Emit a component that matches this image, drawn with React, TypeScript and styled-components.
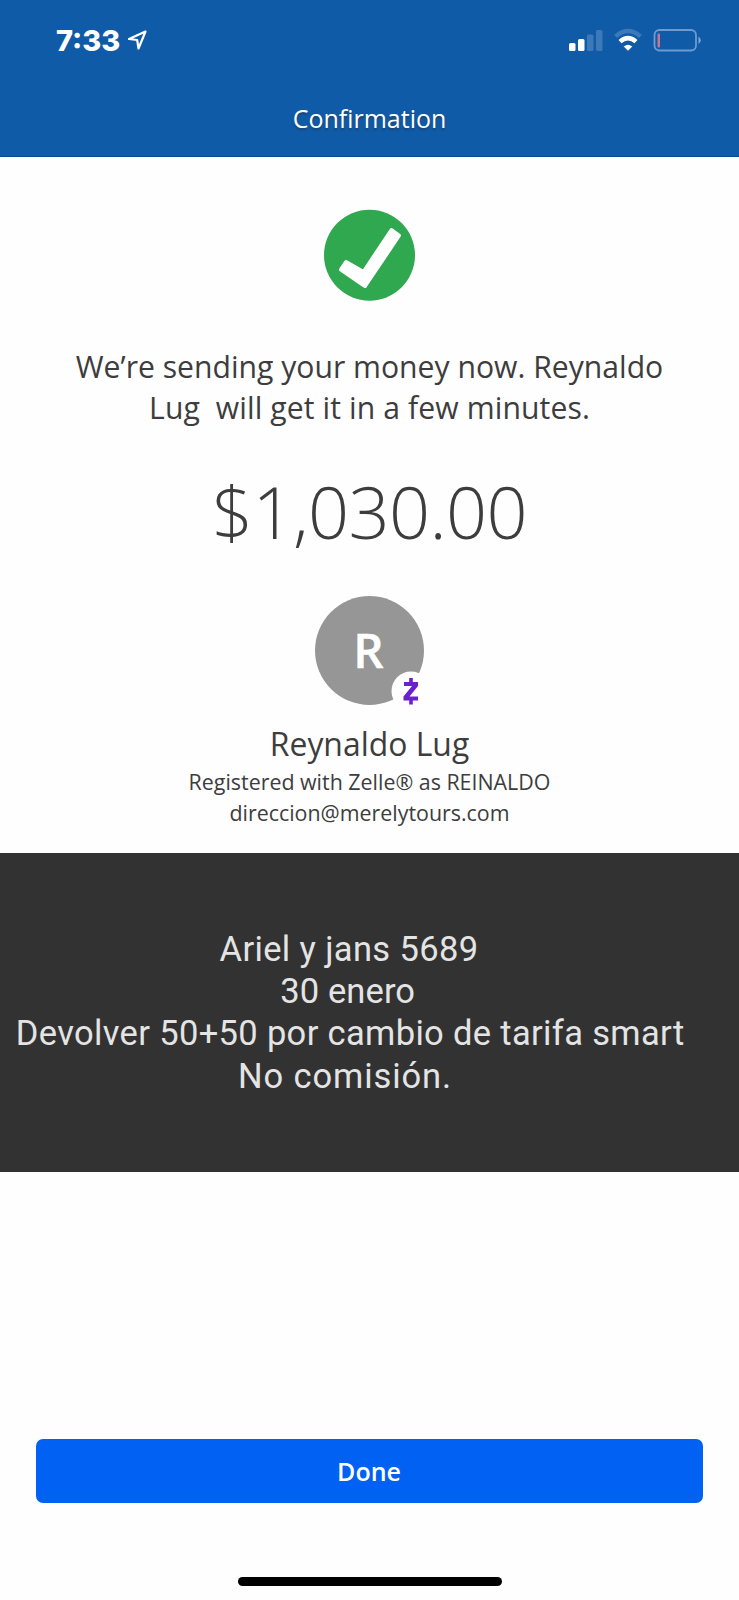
import React from 'react';
import styled, { createGlobalStyle } from 'styled-components';

const GlobalStyle = createGlobalStyle`
  * { box-sizing: border-box; }
  body { margin: 0; background: #fff; }
`;

const Screen = styled.main`
  width: 739px;
  height: 1600px;
  display: flex;
  flex-direction: column;
  overflow: hidden;
  background: #fefefe;
  color: #3d3d3d;
  font-family: 'Open Sans', 'Noto Sans', sans-serif;
`;

const Header = styled.header`
  height: 157px;
  background: #105ba7;
  border-bottom: 1px solid #0c4c90;
  color: #fff;
`;

const StatusBar = styled.div`
  height: 80px;
  padding: 0 37px 0 56px;
  display: flex;
  justify-content: space-between;
`;

const Clock = styled.div`
  display: flex;
  gap: 7px;
  font: 800 29px/81px Inter, sans-serif;
  font-feature-settings: 'case' 1;
`;

const LocationIcon = styled.svg`
  margin-top: 29px;
`;

const StatusIcons = styled.svg`
  margin-top: 28px;
`;

const Title = styled.h1`
  margin: 0;
  text-align: center;
  font-weight: 400;
  font-size: 25px;
  line-height: 76px;
  text-shadow: 0 2px 2px rgba(40, 40, 40, 0.45);
`;

const Summary = styled.section`
  height: 696px;
  padding-top: 52px;
  display: flex;
  flex-direction: column;
  align-items: center;
`;

const Message = styled.p`
  margin: 45px 0 0;
  text-align: center;
  white-space: pre;
  font-size: 30.15px;
  line-height: 41px;
`;

const MessageEnd = styled.span`
  letter-spacing: 0.1px;
`;

const Amount = styled.div`
  margin-top: 34px;
  font-weight: 300;
  font-size: 72px;
  line-height: 98px;
  letter-spacing: -0.6px;
`;

const Avatar = styled.div`
  position: relative;
  margin-top: 36px;
  width: 109px;
  height: 109px;
  padding-right: 2px;
  border-radius: 50%;
  background: #969696;
  color: #fff;
  text-align: center;
  font-weight: 600;
  font-size: 47.5px;
  line-height: 107px;
  -webkit-text-stroke: 0.5px #fff;
`;

const ZelleBadge = styled.svg`
  position: absolute;
  left: 76px;
  top: 75px;
`;

const Name = styled.h2`
  margin: 17px 0 0;
  font-weight: 400;
  font-size: 31.9px;
  line-height: 44px;
`;

const Detail = styled.div`
  font-size: 21.4px;
  line-height: 31.4px;
`;

const Note = styled.section`
  height: 319px;
  padding-top: 75px;
  display: flex;
  flex-direction: column;
  background: #323232;
  color: #e4e4e4;
  font-family: Roboto, sans-serif;
  font-size: 34.5px;
  line-height: 42.2px;
`;

const NoteLine = styled.div<{ $center: number; $spacing: number }>`
  width: ${(p) => p.$center * 2}px;
  text-align: center;
  white-space: nowrap;
  letter-spacing: ${(p) => p.$spacing}px;
`;

const Footer = styled.footer`
  flex: 1;
  padding: 267px 36px 0;
  display: flex;
  flex-direction: column;
  align-items: center;
`;

const DoneButton = styled.button`
  width: 667px;
  height: 64px;
  padding: 0 1px 2px 0;
  border: 0;
  border-radius: 7px;
  background: #0061f2;
  color: #fff;
  font: 600 25px/64px 'Open Sans', sans-serif;
`;

const HomeIndicator = styled.div`
  margin-top: 74px;
  width: 264px;
  height: 9px;
  border-radius: 5px;
  background: #000;
`;

export default function App() {
  return (
    <Screen>
      <GlobalStyle />
      <Header>
        <StatusBar>
          <Clock>
            <span>7:33</span>
            <LocationIcon width="20" height="21" viewBox="0 0 20 21" fill="none">
              <path d="M18.5 2.5 L2 10 L10.2 11 L11.5 19.5 Z" stroke="#fff" strokeWidth="2.2" strokeLinejoin="round" />
            </LocationIcon>
          </Clock>
          <StatusIcons width="134" height="26" viewBox="0 0 134 26" fill="none">
            <rect x="1" y="15" width="6.5" height="8" rx="1.5" fill="#fff" />
            <rect x="10" y="11" width="6.5" height="12" rx="1.5" fill="#fff" />
            <rect x="19" y="6.5" width="6.5" height="16.5" rx="1.5" fill="#3b79b8" />
            <rect x="28" y="2" width="6.5" height="21" rx="1.5" fill="#3b79b8" />
            <path d="M47.5 8.3 Q60 -2.3 72.5 8.3" stroke="#3b79b8" strokeWidth="4.2" />
            <path d="M52 13.6 Q60 6.6 68 13.6" stroke="#fff" strokeWidth="4.4" />
            <path d="M56.3 18.6 Q60 15.8 63.7 18.6 L60 22.3 Z" fill="#fff" stroke="#fff" strokeWidth="1" strokeLinejoin="round" />
            <rect x="86.5" y="2" width="41.5" height="20.5" rx="5" stroke="#6d9bcf" strokeWidth="1.8" />
            <rect x="89.5" y="5.5" width="2.5" height="14" rx="1" fill="#c9758f" />
            <path d="M130.5 8.5 Q135 12 130.5 16 Z" fill="#7fa8d6" />
          </StatusIcons>
        </StatusBar>
        <Title>Confirmation</Title>
      </Header>
      <Summary>
        <svg width="93" height="92" viewBox="0 0 93 92">
          <circle cx="46.5" cy="46.2" r="45.5" fill="#2fa84f" />
          <path d="M23 53 L18 60.5 L42 77 L76 26.5 L68.5 21 L40.5 63 Z" fill="#fff" stroke="#fff" strokeWidth="4" strokeLinejoin="round" />
        </svg>
        <Message>
          {'We’re sending your money now. Reynaldo\n'}
          <MessageEnd>{'Lug  will get it in a few minutes.'}</MessageEnd>
        </Message>
        <Amount>$1,030.00</Amount>
        <Avatar>
          R
          <ZelleBadge width="40" height="40" viewBox="0 0 40 40">
            <circle cx="20" cy="20" r="19.5" fill="#fefefe" />
            <path d="M13 11 H27 V15 L18.5 25.5 H27 V29.5 H12.5 V25.5 L21 15 H13 Z M18.2 7 H21.8 V11 H18.2 Z M18.2 29.5 H21.8 V33.5 H18.2 Z" fill="#6a1fd0" />
          </ZelleBadge>
        </Avatar>
        <Name>Reynaldo Lug</Name>
        <Detail>Registered with Zelle® as REINALDO</Detail>
        <Detail>direccion@merelytours.com</Detail>
      </Summary>
      <Note>
        <NoteLine $center={349} $spacing={0.37}>Ariel y jans 5689</NoteLine>
        <NoteLine $center={347.7} $spacing={0.12}>30 enero</NoteLine>
        <NoteLine $center={350.2} $spacing={0.34}>Devolver 50+50 por cambio de tarifa smart</NoteLine>
        <NoteLine $center={345} $spacing={0.9}>No comisión.</NoteLine>
      </Note>
      <Footer>
        <DoneButton>Done</DoneButton>
        <HomeIndicator />
      </Footer>
    </Screen>
  );
}
